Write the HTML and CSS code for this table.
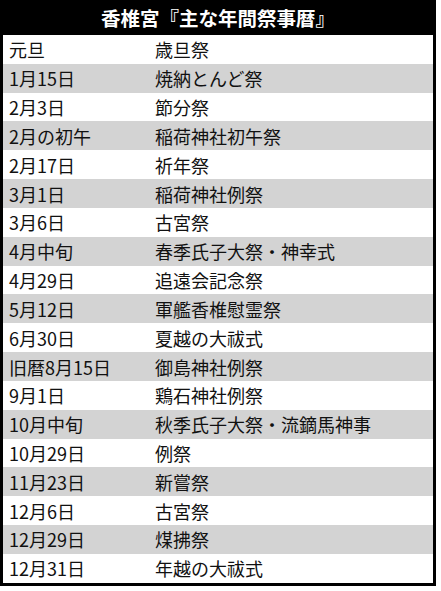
FILE: index.html
```html
<!DOCTYPE html>
<html lang="ja">
<head>
<meta charset="utf-8">
<link rel="stylesheet" href="styles.css">
</head>
<body>
<div class="cal">
  <div class="head">香椎宮『主な年間祭事暦』</div>
  <div class="row"><span class="d">元旦</span><span class="e">歳旦祭</span></div>
  <div class="row alt"><span class="d">1月15日</span><span class="e">焼納とんど祭</span></div>
  <div class="row"><span class="d">2月3日</span><span class="e">節分祭</span></div>
  <div class="row alt"><span class="d">2月の初午</span><span class="e">稲荷神社初午祭</span></div>
  <div class="row"><span class="d">2月17日</span><span class="e">祈年祭</span></div>
  <div class="row alt"><span class="d">3月1日</span><span class="e">稲荷神社例祭</span></div>
  <div class="row"><span class="d">3月6日</span><span class="e">古宮祭</span></div>
  <div class="row alt"><span class="d">4月中旬</span><span class="e">春季氏子大祭・神幸式</span></div>
  <div class="row"><span class="d">4月29日</span><span class="e">追遠会記念祭</span></div>
  <div class="row alt"><span class="d">5月12日</span><span class="e">軍艦香椎慰霊祭</span></div>
  <div class="row"><span class="d">6月30日</span><span class="e">夏越の大祓式</span></div>
  <div class="row alt"><span class="d">旧暦8月15日</span><span class="e">御島神社例祭</span></div>
  <div class="row"><span class="d">9月1日</span><span class="e">鶏石神社例祭</span></div>
  <div class="row alt"><span class="d">10月中旬</span><span class="e">秋季氏子大祭・流鏑馬神事</span></div>
  <div class="row"><span class="d">10月29日</span><span class="e">例祭</span></div>
  <div class="row alt"><span class="d">11月23日</span><span class="e">新嘗祭</span></div>
  <div class="row"><span class="d">12月6日</span><span class="e">古宮祭</span></div>
  <div class="row alt"><span class="d">12月29日</span><span class="e">煤拂祭</span></div>
  <div class="row"><span class="d">12月31日</span><span class="e">年越の大祓式</span></div>
</div>
</body>
</html>
```
FILE: styles.css
```css
html, body {
  margin: 0;
  padding: 0;
  background: #fff;
}
.cal {
  width: 436px;
  box-sizing: border-box;
  border: 3px solid #000;
  border-top: 0;
  font-family: "Noto Sans CJK JP", "Noto Sans", sans-serif;
  color: #111;
}
.head {
  height: 35px;
  margin: 0 -3px;
  background: #000;
  color: #fff;
  font-size: 19.5px;
  font-weight: bold;
  display: flex;
  align-items: center;
  justify-content: center;
  line-height: 1;
}
.row {
  height: 28.84px;
  display: grid;
  grid-template-columns: 146px 1fr;
  align-items: center;
  font-size: 18px;
  line-height: 1;
  padding-left: 6px;
  background: #fff;
}
.row.alt {
  background: #d3d3d3;
}
.d, .e {
  white-space: nowrap;
}
```
